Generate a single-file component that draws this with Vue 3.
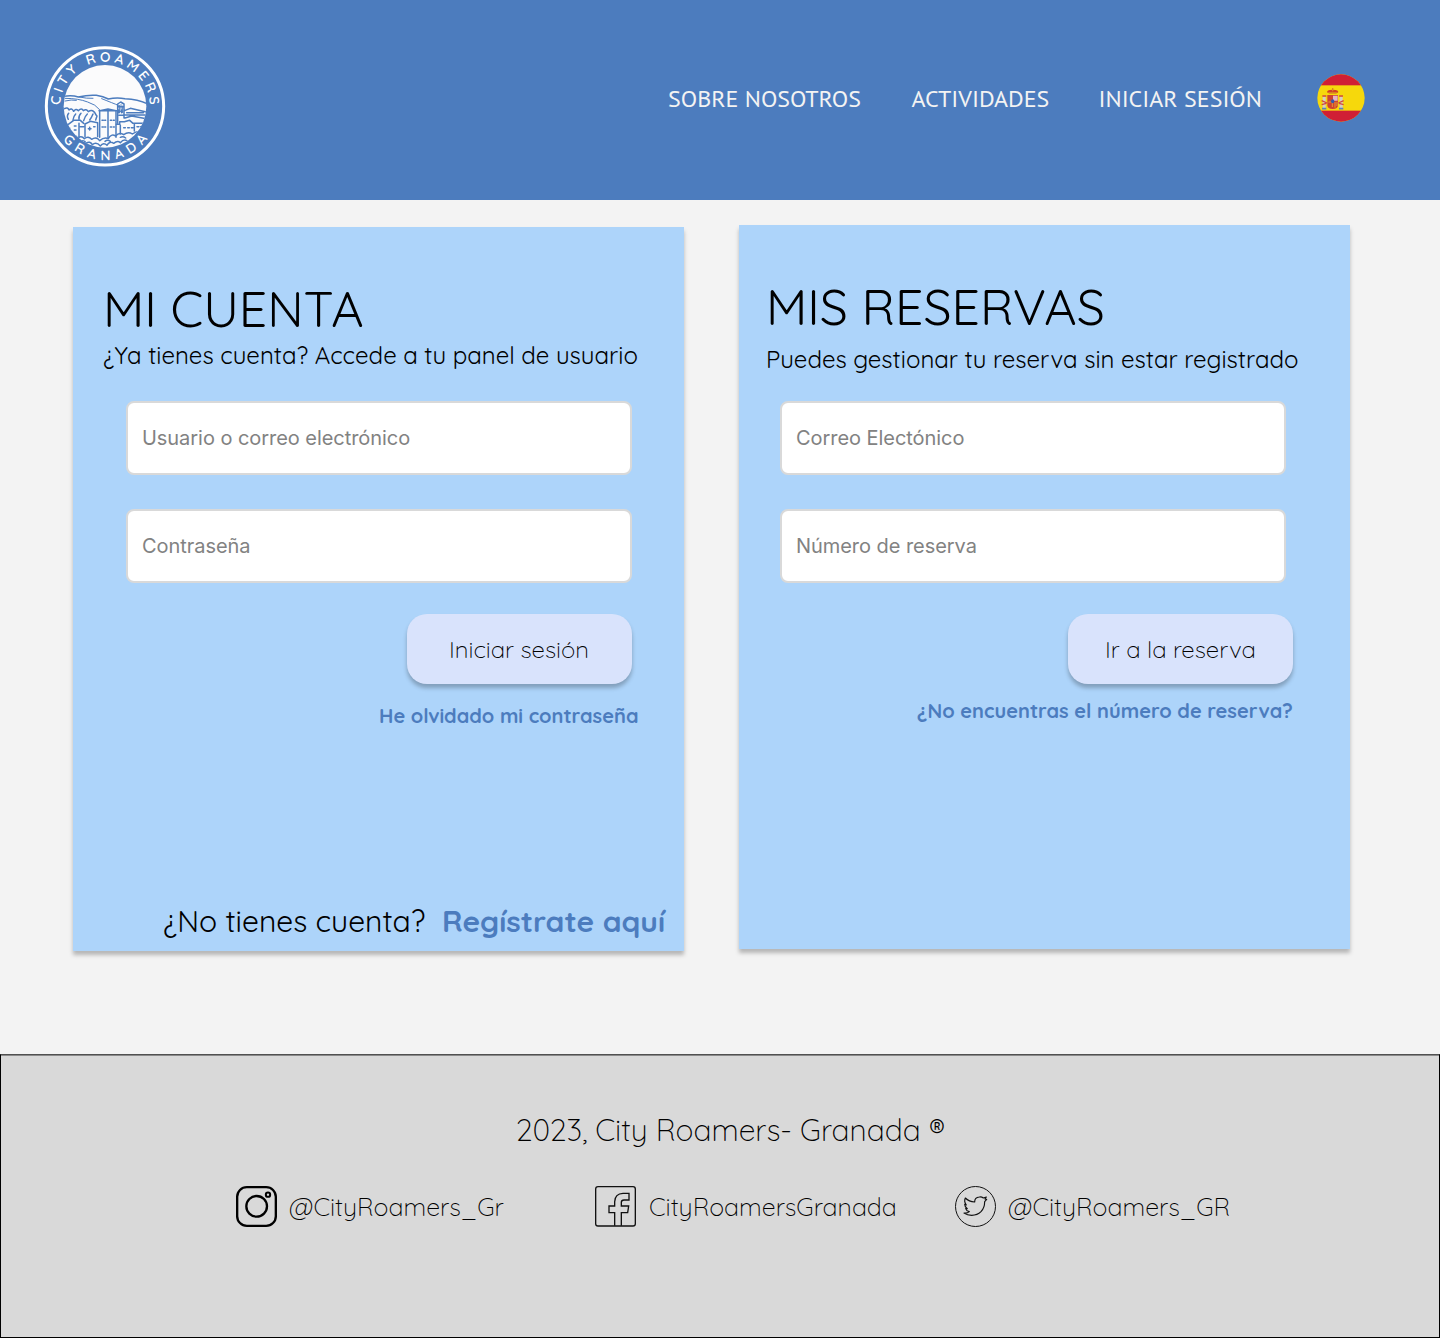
<script setup>
const navLinks = [
  { label: 'SOBRE NOSOTROS', key: 'about' },
  { label: 'ACTIVIDADES', key: 'activities' },
  { label: 'INICIAR SESIÓN', key: 'login' },
]
</script>

<template>
  <div class="page">
    <header class="header">
      <svg class="logo" viewBox="0 0 420 420" aria-label="City Roamers Granada">
        <defs>
          <path id="arc-top" d="M76 211 A134 134 0 0 1 344 211" />
          <path id="arc-bottom" d="M82 309 A161 161 0 0 0 338 309" />
          <clipPath id="scene"><circle cx="210" cy="211" r="124" /></clipPath>
        </defs>
        <circle cx="210" cy="211" r="176" fill="none" stroke="#fff" stroke-width="9" />
        <circle cx="210" cy="211" r="124" fill="#fbfbfc" />
        <g clip-path="url(#scene)" fill="none" stroke="#4c7cbe" stroke-width="4.500" stroke-linejoin="round" stroke-linecap="round">
          <path d="M86 181 Q110 176 130 183 Q160 176 184 178 Q205 181 220 189 Q245 183 270 188 Q310 190 336 203" />
          <path d="M90 187 Q130 187 158 198 Q182 205 194 221 M200 188 Q235 202 250 208 M132 183 Q156 188 174 187 M90 195 Q110 190 124 193" stroke-width="3" />
          <path d="M88 218 Q98 212 102 222 Q110 214 116 226 Q122 216 130 224 Q140 214 145 224 Q154 217 160 227 Q174 216 184 238 M100 250 Q94 240 101 232 M114 252 Q116 240 122 234 M132 250 Q130 240 138 232 M146 254 Q150 240 157 234 M164 252 Q170 244 174 234 M182 252 L186 240" />
          <path d="M194 304 V224 L219 219 L243 224 V304 M219 220 V306 M192 224 H245" fill="#fbfbfc" />
          <path d="M201 253 h4 M209 253 h3 M226 253 h4 M235 253 h3 M201 273 h4 M209 273 h3 M226 273 h4 M235 273 h3" />
          <path d="M248 262 V204 L257 198 L267 204 V246 M248 212 h18 M252 222 v8 M260 222 v8 M252 238 h12 M268 224 L286 217 L334 228 M268 237 H334 M275 230 h50 M270 246 L290 240 L334 248" />
          <path d="M252 226 h10 M253 208 v22 M258 206 v22 M263 210 v20" stroke-width="3" />
          <path d="M244 265 H254 V257 H268 L284 253 L294 262 H328 M256 267 V294 M298 262 V285 M266 275 h5 M278 275 h5 M289 275 h5 M306 272 h5 M316 272 h5" />
          <path d="M96 268 L116 253 H136 L146 262 M132 262 V304 M104 276 V290 M118 270 h5 M118 282 h5 M150 302 V264 L166 256 L188 260 V302 M136 272 h10 M160 278 h8 M164 274 v8 M176 272 h4 M96 290 L120 302" />
          <path d="M108 300 Q120 294 128 306 Q140 298 148 308 Q160 298 170 310 Q184 300 194 314 Q208 302 220 308 Q228 292 242 300 Q252 288 266 296 Q280 286 292 294 Q306 284 322 288" />
          <path d="M136 316 Q148 310 154 322 Q164 314 172 326 Q184 316 196 330 Q206 318 216 328 Q224 314 236 322 Q248 312 256 320 Q266 308 276 314 M210 316 Q218 310 226 316 M256 304 Q264 300 272 306" />
        </g>
        <g class="logo-text">
          <text><textPath href="#arc-top" startOffset="3" textLength="414">CITY ROAMERS</textPath></text>
          <text><textPath href="#arc-bottom" startOffset="2" textLength="294">GRANADA</textPath></text>
        </g>
      </svg>
      <nav class="nav">
        <a v-for="link in navLinks" :key="link.key" :class="link.key">{{ link.label }}</a>
      </nav>
      <svg class="flag" viewBox="0 0 144 144" aria-label="Español">
        <defs><clipPath id="round"><circle cx="72" cy="72" r="71" /></clipPath></defs>
        <g clip-path="url(#round)">
          <rect width="144" height="144" fill="#f6d80c" />
          <rect width="144" height="34" fill="#d01f35" />
          <rect y="110" width="144" height="34" fill="#d01f35" />
          <path d="M17 68 h9 v36 h-9z M68 68 h9 v36 h-9z" fill="#d5cfc4" />
          <path d="M14 80 l16 7 M14 92 l14 -4 M80 80 l-16 7 M80 92 l-14 -4 M16 66 h12 M66 66 h12" stroke="#d4493d" stroke-width="4" />
          <path d="M15 104 h13 M66 104 h13" stroke="#5d83b8" stroke-width="5" />
          <path d="M31 63 h32 v31 q0 11 -16 11 q-16 0 -16 -11z" fill="#cf432f" />
          <path d="M48 65 h14 v15 h-14z" fill="#e4b5c4" />
          <path d="M34 84 h12 v15 M54 84 v17 M60 84 v12" fill="none" stroke="#e29a35" stroke-width="3" />
          <ellipse cx="47" cy="82" rx="5" ry="6" fill="#365bab" />
          <path d="M31 56 q-4 -9 16 -9 q20 0 16 9z" fill="#d24026" />
          <path d="M35 57 h24 M47 42 v10" stroke="#d9871f" stroke-width="4" />
        </g>
      </svg>
    </header>

    <main class="main">
      <section class="card account">
        <h1>MI CUENTA</h1>
        <p class="lead">¿Ya tienes cuenta? Accede a tu panel de usuario</p>
        <form class="form" @submit.prevent>
          <input type="text" placeholder="Usuario o correo electrónico" />
          <input type="password" placeholder="Contraseña" />
          <button type="submit">Iniciar sesión</button>
        </form>
        <a class="help">He olvidado mi contraseña</a>
        <p class="register"><span>¿No tienes cuenta?</span><a>Regístrate aquí</a></p>
      </section>

      <section class="card booking">
        <h1>MIS RESERVAS</h1>
        <p class="lead">Puedes gestionar tu reserva sin estar registrado</p>
        <form class="form" @submit.prevent>
          <input type="text" placeholder="Correo Electónico" />
          <input type="text" placeholder="Número de reserva" />
          <button type="submit">Ir a la reserva</button>
        </form>
        <a class="help">¿No encuentras el número de reserva?</a>
      </section>
    </main>

    <footer class="footer">
      <p class="copy">2023, City Roamers- Granada ®</p>
      <div class="social">
        <a class="instagram">
          <svg viewBox="33 33 123 123" fill="none" stroke="#000">
            <rect x="36.500" y="36.500" width="116" height="116" rx="29" stroke-width="7" />
            <circle cx="95" cy="94" r="31" stroke-width="7" />
            <circle cx="129" cy="59" r="6.500" stroke-width="6" />
          </svg>
          <span>@CityRoamers_Gr</span>
        </a>
        <a class="facebook">
          <svg viewBox="30 33 123 123" fill="none" stroke="#111" stroke-width="4">
            <rect x="32" y="35" width="119" height="118" rx="7" />
            <path d="M89 152 V113 H72 V93 H89 V80 Q90 56 114 55 H132 V75 H117 Q109 75 109 82 V93 H131 L128 113 H109 V152" />
          </svg>
          <span>CityRoamersGranada</span>
        </a>
        <a class="twitter">
          <svg viewBox="30 33 123 123" fill="none" stroke="#111" stroke-width="3" stroke-linejoin="round">
            <circle cx="91.500" cy="94.500" r="60" />
            <path d="M61 69 Q72 80 89 81 Q89 67 103 66 Q110 65 115 69 L124 66 L120 72 L125 73 L119 80 Q119 98 108 110 Q97 121 80 121 Q67 121 57 114 Q67 115 73 110 Q64 108 62 101 L67 101 Q59 96 59 88 L64 90 Q56 80 61 69 Z" stroke-width="3.500" />
          </svg>
          <span>@CityRoamers_GR</span>
        </a>
      </div>
    </footer>
  </div>
</template>

<style>
body {
  margin: 0;
  background: #f3f3f3;
}
</style>

<style scoped>
.page {
  display: flex;
  flex-direction: column;
  box-sizing: border-box;
  width: 1440px;
  height: 1338px;
  color: #000;
  font-family: Quicksand, Lato, sans-serif;
  white-space: nowrap;
}
h1,
p {
  margin: 0;
  font-weight: 400;
}
.header {
  display: flex;
  box-sizing: border-box;
  height: 200px;
  padding: 36px 0 0 35px;
  background: #4c7cbe;
}
.logo {
  width: 140px;
  height: 140px;
}
.logo-text {
  fill: #fff;
  font-family: Quicksand, Lato, sans-serif;
  font-size: 41px;
  font-weight: 600;
}
.nav {
  display: flex;
  margin: 46px 0 0 493px;
  color: #f3f3f3;
  font: 400 24px/34px 'PT Sans', 'Noto Sans', sans-serif;
}
.about {
  width: 243.500px;
}
.activities {
  width: 187px;
}
.login {
  width: 218px;
}
.flag {
  width: 48px;
  height: 48px;
  margin-top: 38px;
}
.main {
  display: flex;
  gap: 55px;
  height: 829px;
  padding: 25px 0 0 73px;
}
.card {
  display: flex;
  flex-direction: column;
  box-sizing: border-box;
  width: 611px;
  height: 724px;
  padding-top: 52px;
  background: #add4fa;
  box-shadow: 0 4px 4px rgba(0, 0, 0, 0.25);
}
.account {
  margin-top: 2px;
}
h1 {
  font-size: 50px;
  line-height: 60px;
}
.account h1 {
  margin-left: 30px;
}
.booking h1 {
  margin-left: 27px;
}
.lead {
  font-size: 24px;
  line-height: 30px;
}
.account .lead {
  margin: 1px 0 0 30px;
}
.booking .lead {
  margin: 7px 0 0 27px;
}
.form {
  display: flex;
  flex-direction: column;
  gap: 34px;
  width: 506px;
}
.account .form {
  margin: 31px 0 0 53px;
}
.booking .form {
  margin: 27px 0 0 41px;
}
input {
  box-sizing: border-box;
  height: 74px;
  padding: 0 14px;
  border: 2px solid #d9d9d9;
  border-radius: 8px;
  background: #fff;
  font: 400 20px Inter, sans-serif;
  letter-spacing: -0.050px;
}
input::placeholder {
  color: #828282;
  opacity: 1;
}
button {
  width: 225px;
  height: 70px;
  margin: -3px 0 0 281px;
  padding: 0;
  border: 0;
  border-radius: 20px;
  background: #d9e3fc;
  box-shadow: 0 4px 4px rgba(0, 0, 0, 0.25);
  color: #000;
  font: 300 24px/30px Quicksand, Lato, sans-serif;
}
.account button {
  padding-right: 1px;
}
.booking button {
  margin-left: 288px;
}
.help {
  color: #4c7cbe;
  font-size: 20px;
  font-weight: 700;
  line-height: 24px;
}
.account .help {
  margin: 20px 0 0 306px;
}
.booking .help {
  margin: 15px 0 0 178px;
}
.register {
  display: flex;
  margin: auto 0 12px 90px;
  font-size: 30px;
  line-height: 36px;
}
.register span {
  width: 279px;
}
.register a {
  color: #4c7cbe;
  font-weight: 700;
}
.footer {
  box-sizing: border-box;
  height: 284px;
  padding-top: 57px;
  border: 1px solid #000;
  border-top-color: #505050;
  background: #d9d9d9;
  box-shadow: inset 0 1px #8a8a8a;
  font-weight: 300;
}
.copy {
  margin-left: 515px;
  font-size: 30px;
  font-weight: 300;
  line-height: 36px;
}
.social {
  display: flex;
  margin: 38px 0 0 235px;
  font-size: 25px;
  line-height: 31px;
}
.social a {
  display: flex;
  align-items: center;
  gap: 12px;
  width: 359px;
}
.social .facebook {
  gap: 13px;
  width: 360px;
}
.social .twitter {
  width: auto;
}
.social svg {
  width: 41px;
  height: 41px;
}
</style>
